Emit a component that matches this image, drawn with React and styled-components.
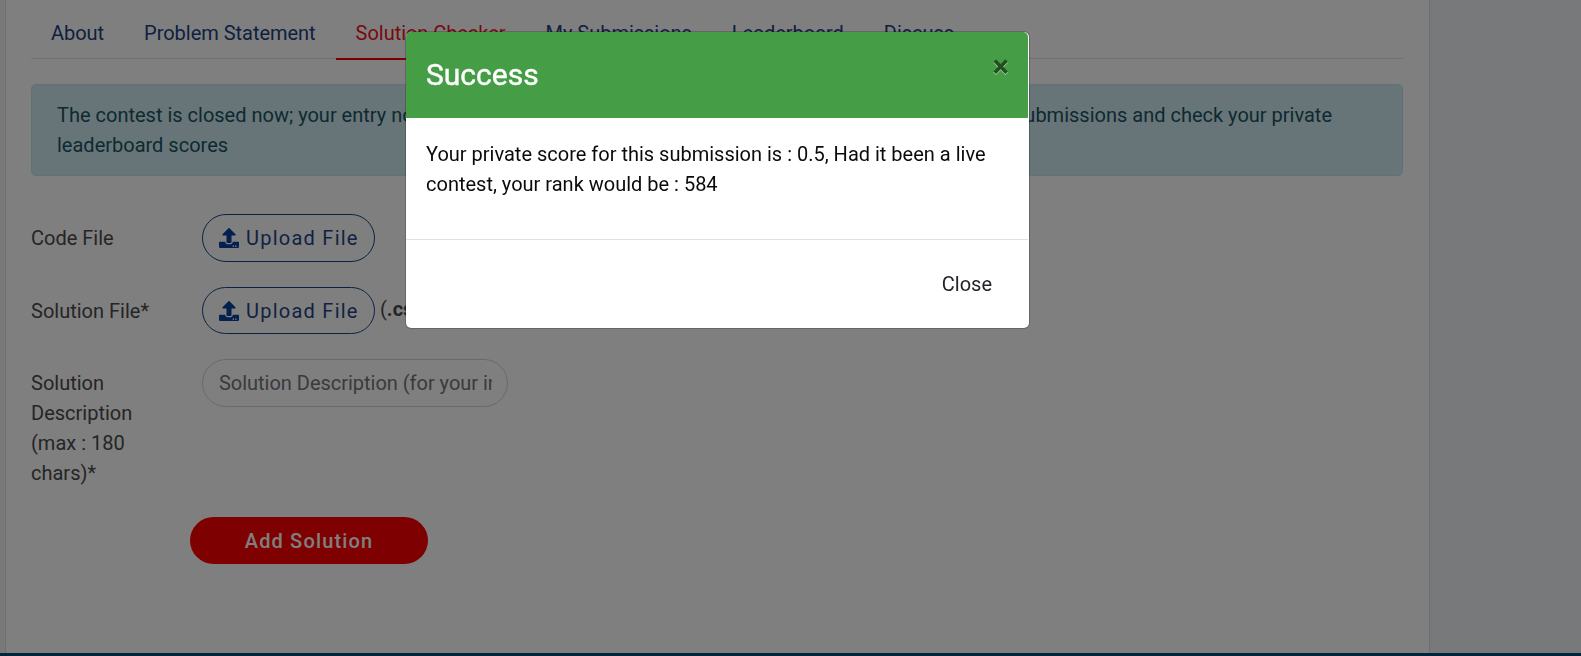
import React from "react";
import styled, { createGlobalStyle } from "styled-components";
import { FaUpload } from "react-icons/fa";

const GlobalStyle = createGlobalStyle`
  *, *::before, *::after { box-sizing: border-box; }
  html, body { margin: 0; height: 100%; overflow: hidden; }
  body {
    background: #eff2f5;
    color: #4b4b4b;
    font: 400 20px/30px Roboto, "Liberation Sans", sans-serif;
  }
  p { margin: 0; }
`;

const Page = styled.div`
  display: flex;
  flex-direction: column;
  height: 656px;
`;

const Card = styled.main`
  flex: 1;
  width: 1425px;
  margin-left: 5px;
  padding: 8px 26px 0 25px;
  background: #fff;
  border: solid #dfdfdf;
  border-width: 0 1px;
`;

const FooterBar = styled.footer`
  height: 3px;
  background: #004872;
`;

const Tabs = styled.nav`
  display: flex;
  height: 51px;
  border-bottom: 1px solid #dee2e6;
`;

const Tab = styled.a`
  height: 52px;
  padding: 10px 20px;
  color: ${(p) => (p.$active ? "#f4101c" : "#20427f")};
  letter-spacing: -0.03px;
  border-bottom: 2px solid ${(p) => (p.$active ? "#f00000" : "transparent")};
`;

const Alert = styled.div`
  margin-top: 25px;
  padding: 15px 25px;
  border: 1px solid #bee5eb;
  border-radius: 5px;
  background: #cfe9f0;
  color: #1b5560;
`;

const AlertDetail = styled.span`
  word-spacing: 1.6px;
`;

const Form = styled.form`
  display: flex;
  flex-direction: column;
  gap: 24.5px;
  margin-top: 38px;
`;

const Row = styled.div`
  display: flex;
  align-items: flex-start;
`;

const Label = styled.label`
  width: 121px;
  margin-right: 50px;
  padding-top: 9px;
`;

const UploadButton = styled.button`
  display: flex;
  align-items: center;
  gap: 7px;
  width: 173px;
  height: ${(p) => (p.$compact ? 47 : 48)}px;
  margin-bottom: ${(p) => (p.$compact ? 1 : 0)}px;
  padding: ${(p) => (p.$compact ? 1 : 0)}px 16px 0;
  border: 1px solid #1b4585;
  border-radius: 25px;
  background: transparent;
  color: #1f4585;
  font: inherit;
  letter-spacing: 1.25px;
  white-space: nowrap;
  svg { flex: none; color: #06409c; }
`;

const Hint = styled.span`
  padding: 7px 0 0 5px;
`;

const Input = styled.input`
  width: 306px;
  height: 48px;
  padding: 0 15px 0 16px;
  border: 1px solid #ced4da;
  border-radius: 25px;
  background: transparent;
  font: inherit;
  &::placeholder { color: #70767c; opacity: 1; letter-spacing: -0.02px; }
`;

const Submit = styled.button`
  width: 238px;
  height: 47px;
  margin: 4px 0 0 159px;
  padding: 1px 0 0;
  border: 0;
  border-radius: 25px;
  background: #ff0000;
  color: #fff;
  font: 500 20px/30px Roboto, sans-serif;
  letter-spacing: 1.15px;
`;

const Backdrop = styled.div`
  position: fixed;
  inset: 0;
  background: rgba(0, 0, 0, 0.5);
`;

const Dialog = styled.section`
  width: 625px;
  height: 298px;
  margin: 31px 0 0 405px;
  border: 1px solid rgba(0, 0, 0, 0.2);
  border-radius: 6px;
  background: #fff;
  background-clip: padding-box;
  color: #0b0b0b;
`;

const DialogHeader = styled.header`
  display: flex;
  justify-content: space-between;
  width: 622px;
  height: 86px;
  padding: 20px;
  border-radius: 5px 5px 0 0;
  background: #459e45;
`;

const DialogTitle = styled.h4`
  margin: 0;
  color: #fff;
  font-size: 30px;
  font-weight: 400;
  line-height: 45px;
  -webkit-text-stroke: 0.4px #fff;
`;

const DismissButton = styled.button`
  height: 30px;
  padding: 0;
  margin-right: -1px;
  border: 0;
  background: none;
  color: #000;
  font: 700 31px/30px Roboto, sans-serif;
  text-shadow: 0 1px 0 #fff;
  opacity: 0.5;
`;

const DialogBody = styled.div`
  height: 121px;
  padding: 21px 20px;
`;

const DialogFooter = styled.footer`
  display: flex;
  justify-content: flex-end;
  width: 622px;
  padding: 20px;
  border-top: 1px solid #dee2e6;
`;

const CloseButton = styled.button`
  height: 48px;
  padding: 0 16px;
  border: 0;
  background: none;
  color: #212529;
  font: inherit;
`;

const tabs = ["About", "Problem Statement", "Solution Checker", "My Submissions", "Leaderboard", "Discuss"];

function Upload({ compact }) {
  return (
    <UploadButton type="button" $compact={compact}>
      <FaUpload size={20} />
      Upload File
    </UploadButton>
  );
}

export default function App() {
  return (
    <>
      <GlobalStyle />
      <Page>
        <Card>
          <Tabs>
            {tabs.map((name) => (
              <Tab key={name} $active={name === "Solution Checker"}>{name}</Tab>
            ))}
          </Tabs>
          <Alert>
            The contest is closed now; your entry{" "}
            <AlertDetail>now will not count towards the leaderboard. However, you can make</AlertDetail>
            {" "}submissions and check your private leaderboard scores
          </Alert>
          <Form>
            <Row><Label>Code File</Label><Upload /></Row>
            <Row><Label>Solution File*</Label><Upload compact /><Hint>(<b>.csv</b> format)</Hint></Row>
            <Row>
              <Label>Solution Description (max : 180 chars)*</Label>
              <Input placeholder="Solution Description (for your information)" />
            </Row>
            <Submit type="button">Add Solution</Submit>
          </Form>
        </Card>
        <FooterBar />
      </Page>
      <Backdrop>
        <Dialog role="dialog">
          <DialogHeader>
            <DialogTitle>Success</DialogTitle>
            <DismissButton>×</DismissButton>
          </DialogHeader>
          <DialogBody>
            <p>Your private score for this submission is : 0.5, Had it been a live contest, your rank would be : 584</p>
          </DialogBody>
          <DialogFooter><CloseButton>Close</CloseButton></DialogFooter>
        </Dialog>
      </Backdrop>
    </>
  );
}
